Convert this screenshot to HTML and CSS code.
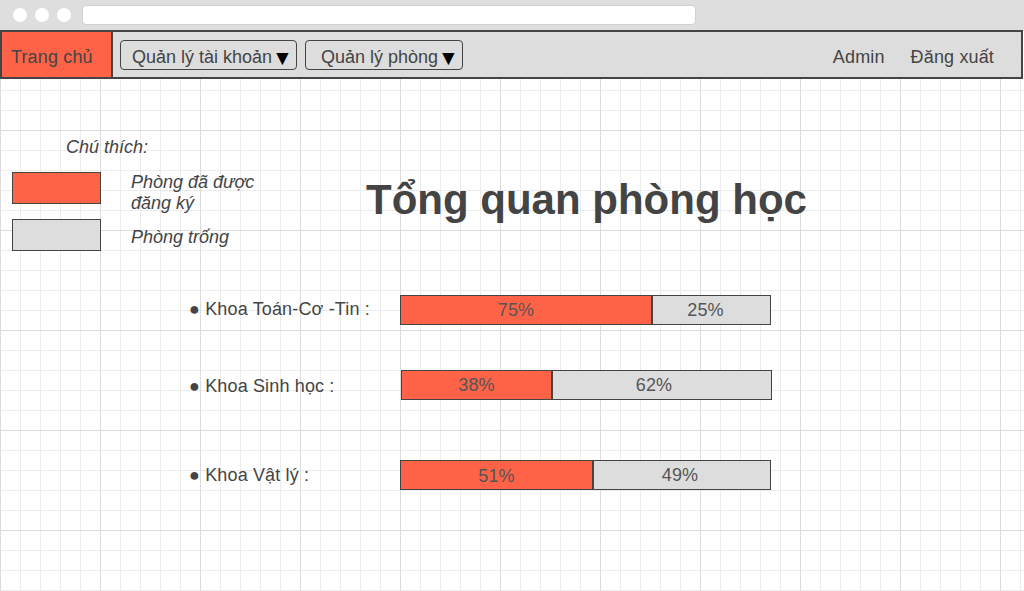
FILE: index.html
```html
<!DOCTYPE html>
<html lang="vi">
<head>
<meta charset="utf-8">
<title>Tổng quan phòng học</title>
<link rel="stylesheet" href="styles.css">
</head>
<body>
<div class="chrome">
  <span class="dot"></span><span class="dot"></span><span class="dot"></span>
  <div class="address"></div>
</div>
<div class="page">
  <nav class="navbar">
    <a class="home">Trang chủ</a>
    <button class="menu menu-account">Quản lý tài khoản<span class="caret">▼</span></button>
    <button class="menu menu-room">Quản lý phòng<span class="caret">▼</span></button>
    <div class="nav-right">
      <a class="nav-link">Admin</a>
      <a class="nav-link">Đăng xuất</a>
    </div>
  </nav>

  <div class="top">
    <div class="legend">
      <div class="legend-title">Chú thích:</div>
      <div class="legend-item item-booked">
        <span class="swatch swatch-booked"></span>
        <span class="legend-text">Phòng đã được đăng ký</span>
      </div>
      <div class="legend-item item-free">
        <span class="swatch swatch-free"></span>
        <span class="legend-text">Phòng trống</span>
      </div>
    </div>
    <h1 class="title">Tổng quan phòng học</h1>
  </div>

  <div class="stats">
    <div class="stat stat-1">
      <span class="stat-label">● Khoa Toán-Cơ -Tin :</span>
      <div class="bar">
        <span class="seg seg-booked seg-left" style="width:252px">75%</span>
        <span class="seg seg-free">25%</span>
      </div>
    </div>
    <div class="stat stat-2">
      <span class="stat-label">● Khoa Sinh học :</span>
      <div class="bar bar-shift">
        <span class="seg seg-booked" style="width:151px">38%</span>
        <span class="seg seg-free seg-free-wide">62%</span>
      </div>
    </div>
    <div class="stat stat-3">
      <span class="stat-label">● Khoa Vật lý :</span>
      <div class="bar">
        <span class="seg seg-booked seg-low" style="width:193px">51%</span>
        <span class="seg seg-free seg-free-narrow">49%</span>
      </div>
    </div>
  </div>
</div>
</body>
</html>
```

FILE: styles.css
```css
html, body {
  margin: 0;
  padding: 0;
}

body {
  width: 1024px;
  height: 591px;
  overflow: hidden;
  font-family: "Liberation Sans", Arial, sans-serif;
  color: #444;
  background: #fff;
}

.chrome {
  height: 30px;
  background: #dedede;
  display: flex;
  align-items: center;
  padding-left: 13px;
  box-sizing: border-box;
}

.dot {
  width: 14px;
  height: 14px;
  border-radius: 50%;
  background: #fff;
  margin-right: 8px;
}

.address {
  margin-left: 3px;
  width: 614px;
  height: 20px;
  box-sizing: border-box;
  background: #fff;
  border: 1px solid #d0d0d0;
  border-radius: 4px;
  margin-top: -1px;
}

.page {
  height: 561px;
  background-color: #fff;
  background-image:
    linear-gradient(to right, #dcdcdc 1px, transparent 1px),
    linear-gradient(to bottom, #dcdcdc 1px, transparent 1px),
    linear-gradient(to right, #ececec 1px, transparent 1px),
    linear-gradient(to bottom, #ececec 1px, transparent 1px);
  background-size: 100px 100px, 100px 100px, 20px 20px, 20px 20px;
}

.navbar {
  width: 1023px;
  height: 49px;
  box-sizing: border-box;
  border: 2px solid #444;
  background: #dddddd;
  display: flex;
  align-items: center;
  font-size: 18px;
}

.home {
  align-self: stretch;
  width: 111px;
  box-sizing: border-box;
  padding: 6px 0 0 9px;
  background: #ff6347;
  border-right: 2px solid #444;
  display: flex;
  align-items: center;
  color: #444;
  letter-spacing: 0.15px;
}

.menu {
  height: 30px;
  box-sizing: border-box;
  border: 1px solid #444;
  border-radius: 4px;
  background: transparent;
  font-family: inherit;
  font-size: 18px;
  color: #444;
  display: flex;
  align-items: center;
  padding: 5px 3px 0 11px;
  margin-top: 1px;
}

.menu-account {
  margin-left: 7px;
}

.menu-room {
  margin-left: 8px;
  padding-left: 15px;
}

.caret {
  color: #000;
  font-size: 21px;
  line-height: 1;
  margin: -1px 0 0 0;
}

.nav-right {
  margin-left: auto;
  display: flex;
  gap: 26px;
  padding: 6px 27px 0 0;
  letter-spacing: 0.15px;
}

.nav-link {
  color: #444;
}

.top {
  display: grid;
  grid-template-columns: 366px auto;
  margin-top: 58px;
}

.legend {
  font-style: italic;
  font-size: 18px;
  line-height: 21px;
}

.legend-title {
  margin-left: 66px;
}

.legend-item {
  display: flex;
  align-items: flex-start;
  gap: 30px;
  margin-left: 12px;
}

.item-booked {
  margin-top: 14px;
}

.item-free {
  margin-top: 5px;
}

.swatch {
  width: 89px;
  height: 32px;
  box-sizing: border-box;
  border: 1px solid #444;
  flex: none;
}

.swatch-booked {
  background: #ff6347;
}

.swatch-free {
  background: #dddddd;
}

.legend-text {
  width: 140px;
}

.item-free .legend-text {
  padding-top: 8px;
}

.title {
  margin: 39px 0 0 0;
  font-size: 42px;
  line-height: 48px;
  font-weight: bold;
  color: #444;
}

.stats {
  margin-left: 189px;
  font-size: 18px;
  letter-spacing: 0.15px;
}

.stat {
  display: flex;
  align-items: center;
}

.stat-1 {
  margin-top: 44px;
}

.stat-2 {
  margin-top: 45px;
}

.stat-3 {
  margin-top: 60px;
}

.stat-label {
  width: 211px;
  flex: none;
  padding-top: 2px;
}

.stat-1 .stat-label {
  margin-top: -4px;
}

.stat-3 .stat-label {
  padding-top: 0;
}

.bar {
  width: 371px;
  height: 30px;
  box-sizing: border-box;
  border: 1px solid #444;
  display: flex;
}

.bar-shift {
  margin-left: 1px;
}

.seg {
  display: flex;
  align-items: center;
  justify-content: center;
  color: #555;
  font-size: 18px;
  box-sizing: border-box;
}

.seg-booked {
  background: #ff6347;
  border-right: 2px solid #444;
  flex: none;
}

.seg-left {
  padding-right: 20px;
}

.seg-low {
  padding-top: 3px;
}

.seg-free {
  flex: 1;
  background: #dddddd;
  padding-right: 12px;
}

.seg-free-wide {
  padding-right: 16px;
}

.seg-free-narrow {
  padding-right: 4px;
}
```
